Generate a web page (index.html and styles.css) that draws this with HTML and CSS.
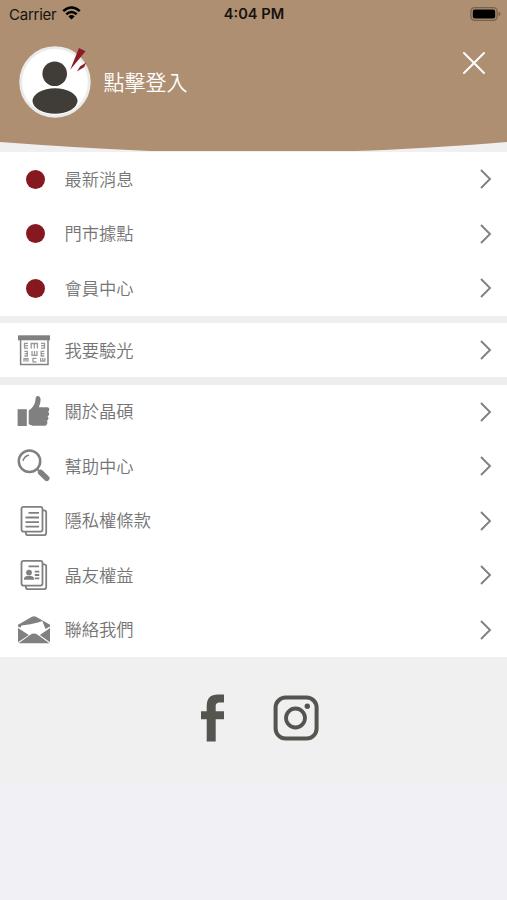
FILE: index.html
```html
<!DOCTYPE html>
<html lang="zh-Hant">
<head>
<meta charset="utf-8">
<title>Menu</title>
<link rel="stylesheet" href="styles.css">
</head>
<body>
<svg class="defs" aria-hidden="true">
  <symbol id="chevron" viewBox="0 0 14 22"><path d="M2 2l9 9-9 9" fill="none" stroke="currentColor" stroke-width="1.9"/></symbol>
</svg>
<header class="header">
  <svg class="curve" viewBox="0 0 507 152" preserveAspectRatio="none"><path d="M0 0H507V142Q420 149 355 151H150Q80 148 0 142Z" fill="#ae8f72"/></svg>
  <div class="status">
    <div class="carrier"><span>Carrier</span>
      <svg width="19" height="14" viewBox="0 0 19 14"><g fill="none" stroke="#000" stroke-width="2.5"><path d="M1.2 5.1Q9.5-2.2 17.8 5.1"/><path d="M4.3 8.3Q9.5 3.8 14.7 8.3"/></g><path d="M6.4 10.4Q9.5 7.8 12.6 10.4L9.5 13.6Z"/></svg>
    </div>
    <div class="time">4:04 PM</div>
    <svg class="battery" width="31" height="14" viewBox="0 0 31 14"><rect x=".9" y=".7" width="26.2" height="12.6" rx="3.7" fill="none" stroke="#76614d" stroke-width="1.3"/><rect x="2.8" y="2.6" width="22.4" height="8.8" rx="2" fill="#000"/><path d="M28.5 4.7q2 .7 2 2.3t-2 2.3z" fill="#76614d"/></svg>
  </div>
  <div class="profile">
    <svg class="avatar" width="74" height="74" viewBox="0 0 74 74"><circle cx="37" cy="37" r="34.3" fill="#fff" stroke="#ebebeb" stroke-width="2.8"/><circle cx="36.7" cy="28.7" r="12.3" fill="#403d39"/><ellipse cx="37" cy="56" rx="22.5" ry="12.7" fill="#403d39"/><path d="M61 3L67.5 6.3 52.2 24.8Z" fill="#8c1b25"/><path d="M68.3 17.5L66 22.3 58.8 26.5 62.2 21.3Z" fill="#8c1b25"/></svg>
    <span class="login">點擊登入</span>
    <svg class="close" width="24" height="24" viewBox="0 0 24 24"><path d="M2 2l20 20M22 2L2 22" stroke="#fff" stroke-width="2" stroke-linecap="round"/></svg>
  </div>
</header>
<main>
  <nav class="group">
    <a class="row"><span class="icon"><i class="dot"></i></span><span class="label">最新消息</span><svg class="chevron"><use href="#chevron"/></svg></a>
    <a class="row"><span class="icon"><i class="dot"></i></span><span class="label">門市據點</span><svg class="chevron"><use href="#chevron"/></svg></a>
    <a class="row"><span class="icon"><i class="dot"></i></span><span class="label">會員中心</span><svg class="chevron"><use href="#chevron"/></svg></a>
  </nav>
  <nav class="group">
    <a class="row"><span class="icon">
      <svg width="36" height="36" viewBox="0 0 36 36"><path d="M2 3.3H34V8.3H2Z" fill="#808080"/><path d="M4.6 8V32.4H32V8" fill="none" stroke="#808080" stroke-width="1.5"/><g fill="none" stroke="#999" stroke-width="1.3"><path d="M12 11.3H8.5V16.2H12M8.5 13.7H12M15.2 16.5V11.5H21.4V16.5M18.3 11.5V16.5M25 11.3H28.5V16.2H25M25 13.7H28.5"/><path d="M8.3 19.3H11.3V24H8.3M8.6 21.6H11.3M16 19V23.4H21V19M18.5 19V23.4M28.3 19.3H25.2V24H28.3M25.2 21.6H28.3"/><path d="M8 29.7V26.6H12V29.7M10 26.6V29.7M20.5 26.4H17V29.8H20.5M24.6 26V29.2H28.8V26M26.7 26V29.2"/></g></svg>
    </span><span class="label">我要驗光</span><svg class="chevron"><use href="#chevron"/></svg></a>
  </nav>
  <nav class="group">
    <a class="row"><span class="icon">
      <svg width="36" height="36" viewBox="0 0 36 36" fill="#808080"><path d="M1.6 15.2H10.8V32H1.6Z"/><path d="M12.7 16.5C16 14.5 18.7 11 19.2 7.5L19.8 3.6C20.2 1.2 24.6 1.6 24.6 5.5C24.6 8.8 23.4 11.3 22.8 13.3H31.2C33.8 13.3 34 17.2 31.8 17.8C34 18.8 33.3 22 31.5 22.4C33.2 23.5 32.4 26.4 30.6 26.7C32.3 28 31.2 31.8 28.5 31.8H18.5C16 31.8 14.5 31.2 12.7 30.3Z"/></svg>
    </span><span class="label">關於晶碩</span><svg class="chevron"><use href="#chevron"/></svg></a>
    <a class="row"><span class="icon">
      <svg width="36" height="36" viewBox="0 0 36 36" fill="none" stroke="#808080"><circle cx="13.5" cy="13.2" r="10.7" stroke-width="2.5"/><path d="M7.2 12.3Q8.3 8.4 12.5 7.2" stroke-width="1.5" stroke-linecap="round"/><path d="M20.8 20.8L24 24" stroke-width="2"/><path d="M24.7 24.5L30.7 30.2" stroke-width="5.6" stroke-linecap="round"/></svg>
    </span><span class="label">幫助中心</span><svg class="chevron"><use href="#chevron"/></svg></a>
    <a class="row"><span class="icon">
      <svg width="36" height="36" viewBox="0 0 36 36" fill="none" stroke="#808080" stroke-width="1.8"><rect x="5.5" y="3.8" width="21" height="24.8" rx="2"/><path d="M27 7.3H28Q30.2 7.3 30.2 9.5V30Q30.2 32.2 28 32.2H12Q9.8 32.2 9.8 30V29M12.5 9.8H23M9.5 14.5H23M9.5 19.2H23M9.5 23.7H23"/></svg>
    </span><span class="label">隱私權條款</span><svg class="chevron"><use href="#chevron"/></svg></a>
    <a class="row"><span class="icon">
      <svg width="36" height="36" viewBox="0 0 36 36" fill="none" stroke="#808080" stroke-width="1.8"><rect x="5.5" y="3.8" width="21" height="24.8" rx="2"/><path d="M27 7.3H28Q30.2 7.3 30.2 9.5V30Q30.2 32.2 28 32.2H12Q9.8 32.2 9.8 30V29M12.5 9.3H23M18.8 14.7H23.3M18.8 18H23.3M18.8 21.3H23.3"/><g fill="#808080" stroke="none"><circle cx="13" cy="15.6" r="2.9"/><path d="M7.8 22.8Q7.8 19 11.5 19H14.5Q18.2 19 18.2 22.8Z"/></g></svg>
    </span><span class="label">晶友權益</span><svg class="chevron"><use href="#chevron"/></svg></a>
    <a class="row"><span class="icon">
      <svg width="36" height="36" viewBox="0 0 36 36" fill="#808080"><path d="M2 14.5V12.8L16 4.8Q18 3.8 20 4.8L34 12.8V14.5L29.5 17L26.3 9L22 10.6Q15 12.8 5.5 13.5L4.5 15.8Z"/><path d="M2 16L12.8 23L2 30.2ZM34 16V30.2L23.8 22.9ZM2.6 31.3L14 22.9Q18 20 22 22.9L33.4 31.3Z"/></svg>
    </span><span class="label">聯絡我們</span><svg class="chevron"><use href="#chevron"/></svg></a>
  </nav>
</main>
<footer class="footer">
  <svg width="26" height="48" viewBox="0 0 26 48"><path d="M24 .4V8.5H19.5Q15.7 8.5 15.7 12V17.3H24V25.3H15.7V47.5H6.7V25.3H1V17.3H6.7V11.8Q6.7.4 18 .4Z" fill="#555550"/></svg>
  <svg width="46" height="46" viewBox="0 0 46 46"><rect x="2.6" y="2.6" width="41" height="41" rx="10" fill="none" stroke="#555550" stroke-width="4"/><circle cx="22.5" cy="23" r="9.5" fill="none" stroke="#555550" stroke-width="3.8"/><circle cx="34.3" cy="11.2" r="2.7" fill="#555550"/></svg>
</footer>
</body>
</html>
```
FILE: styles.css
```css
* { box-sizing: border-box; }
body {
  margin: 0;
  min-height: 900px;
  background: #f0f0f5;
  font-family: "Noto Sans CJK TC", sans-serif;
}
.defs { display: none; }
svg { flex: none; }
.header {
  position: relative;
  height: 152px;
  background: #f0f0f0;
}
.curve {
  position: absolute;
  inset: 0;
  width: 100%;
  height: 100%;
}
.status {
  position: relative;
  display: grid;
  grid-template-columns: 1fr auto 1fr;
  align-items: center;
  height: 27px;
  padding: 0 6px 0 9px;
  font: 15px/27px Inter, sans-serif;
  color: #16120e;
}
.carrier {
  display: flex;
  align-items: center;
  gap: 6px;
  letter-spacing: -0.25px;
}
.carrier svg { margin-top: -2px; }
.time {
  margin-left: -2px;
  padding-top: 1px;
  font-weight: 600;
  font-size: 14.6px;
}
.battery { justify-self: end; }
.profile {
  position: relative;
  display: flex;
  align-items: center;
  height: 109px;
  padding: 0 21px 0 17.5px;
}
.login {
  flex: 1;
  margin-left: 12px;
  padding-bottom: 2px;
  color: #fff;
  font-size: 21px;
  font-weight: 350;
}
.close { margin-top: -37px; }
main {
  display: grid;
  gap: 7.25px;
  background: #eee;
}
.group { background: #fff; }
.row {
  display: flex;
  align-items: center;
  height: 54.5px;
  padding: 0 14.5px 0 16px;
}
.icon {
  display: flex;
  width: 40px;
}
.dot {
  width: 19px;
  height: 19px;
  margin-left: 10px;
  border-radius: 50%;
  background: #861820;
}
.label {
  flex: 1;
  margin-left: 8.5px;
  padding-bottom: 2px;
  color: #757575;
  font-size: 17.3px;
  font-weight: 350;
}
.chevron {
  width: 14px;
  height: 22px;
  color: #808080;
}
.footer {
  display: flex;
  justify-content: center;
  align-items: center;
  gap: 47.5px;
  height: 126px;
  padding: 0 0 4.5px 11.5px;
  background: #f0f0f0;
}
```
